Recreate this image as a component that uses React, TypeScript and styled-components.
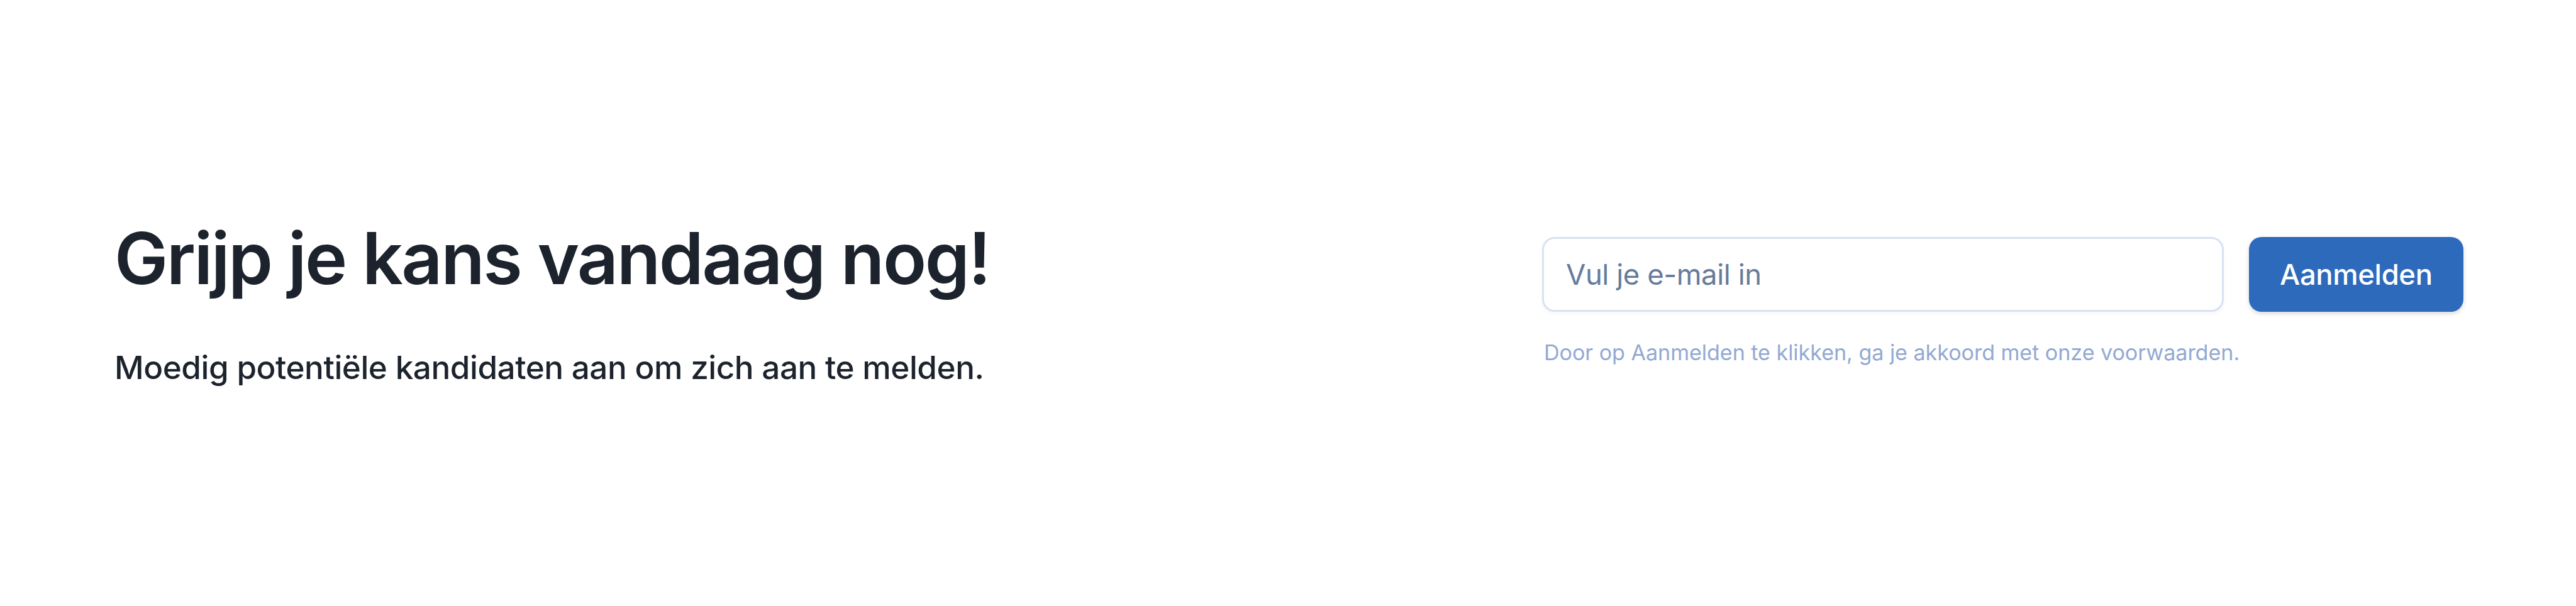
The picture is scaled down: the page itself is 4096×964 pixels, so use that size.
import React from "react";
import styled, { createGlobalStyle } from "styled-components";

const GlobalStyle = createGlobalStyle`
  * {
    box-sizing: border-box;
  }
  body {
    margin: 0;
    background: #fff;
    font-family: Inter, "Liberation Sans", sans-serif;
  }
`;

const Section = styled.section`
  display: flex;
  justify-content: space-between;
  height: 964px;
  padding: 339.5px 179px 0 182px;
`;

const Title = styled.h2`
  margin: 0;
  color: #1d232d;
  font-size: 113.8px;
  font-weight: 600;
  line-height: 142px;
  letter-spacing: -2.5px;
  white-space: nowrap;
`;

const Subtitle = styled.p`
  margin: 64.5px 0 0;
  color: #1d232d;
  font-size: 51.2px;
  font-weight: 500;
  line-height: 76px;
  letter-spacing: -0.46px;
  white-space: nowrap;
`;

const Form = styled.form`
  width: 1465px;
  padding-top: 37.4px;
`;

const Fields = styled.div`
  display: flex;
  gap: 40px;
`;

const EmailInput = styled.input`
  flex: 1;
  height: 119.5px;
  padding: 0 35px;
  border: 3px solid #d8e2f3;
  border-radius: 20px;
  box-shadow: 0 3px 6px rgba(0, 0, 0, 0.04);
  font-family: inherit;
  font-size: 45.5px;
  letter-spacing: -0.465px;

  &::placeholder {
    color: #667b9b;
    opacity: 1;
  }
`;

const SubmitButton = styled.button`
  width: 341.3px;
  height: 119.5px;
  padding: 0;
  border: none;
  border-radius: 20px;
  background: #2d6abb;
  box-shadow: 0 3px 8.5px rgba(0, 0, 0, 0.1), 0 3px 6px rgba(0, 0, 0, 0.06);
  color: #fff;
  font-family: inherit;
  font-size: 45.5px;
  font-weight: 500;
  letter-spacing: -0.42px;
`;

const Terms = styled.p`
  margin: 40.7px 0 0 3px;
  color: #93a9d2;
  font-size: 34.13px;
  line-height: 48px;
  letter-spacing: -0.06px;
  white-space: nowrap;
`;

export default function App() {
  return (
    <Section>
      <GlobalStyle />
      <div>
        <Title>Grijp je kans vandaag nog!</Title>
        <Subtitle>
          Moedig potentiële kandidaten aan om zich aan te melden.
        </Subtitle>
      </div>
      <Form>
        <Fields>
          <EmailInput type="email" placeholder="Vul je e-mail in" />
          <SubmitButton type="button">Aanmelden</SubmitButton>
        </Fields>
        <Terms>
          Door op Aanmelden te klikken, ga je akkoord met onze voorwaarden.
        </Terms>
      </Form>
    </Section>
  );
}
